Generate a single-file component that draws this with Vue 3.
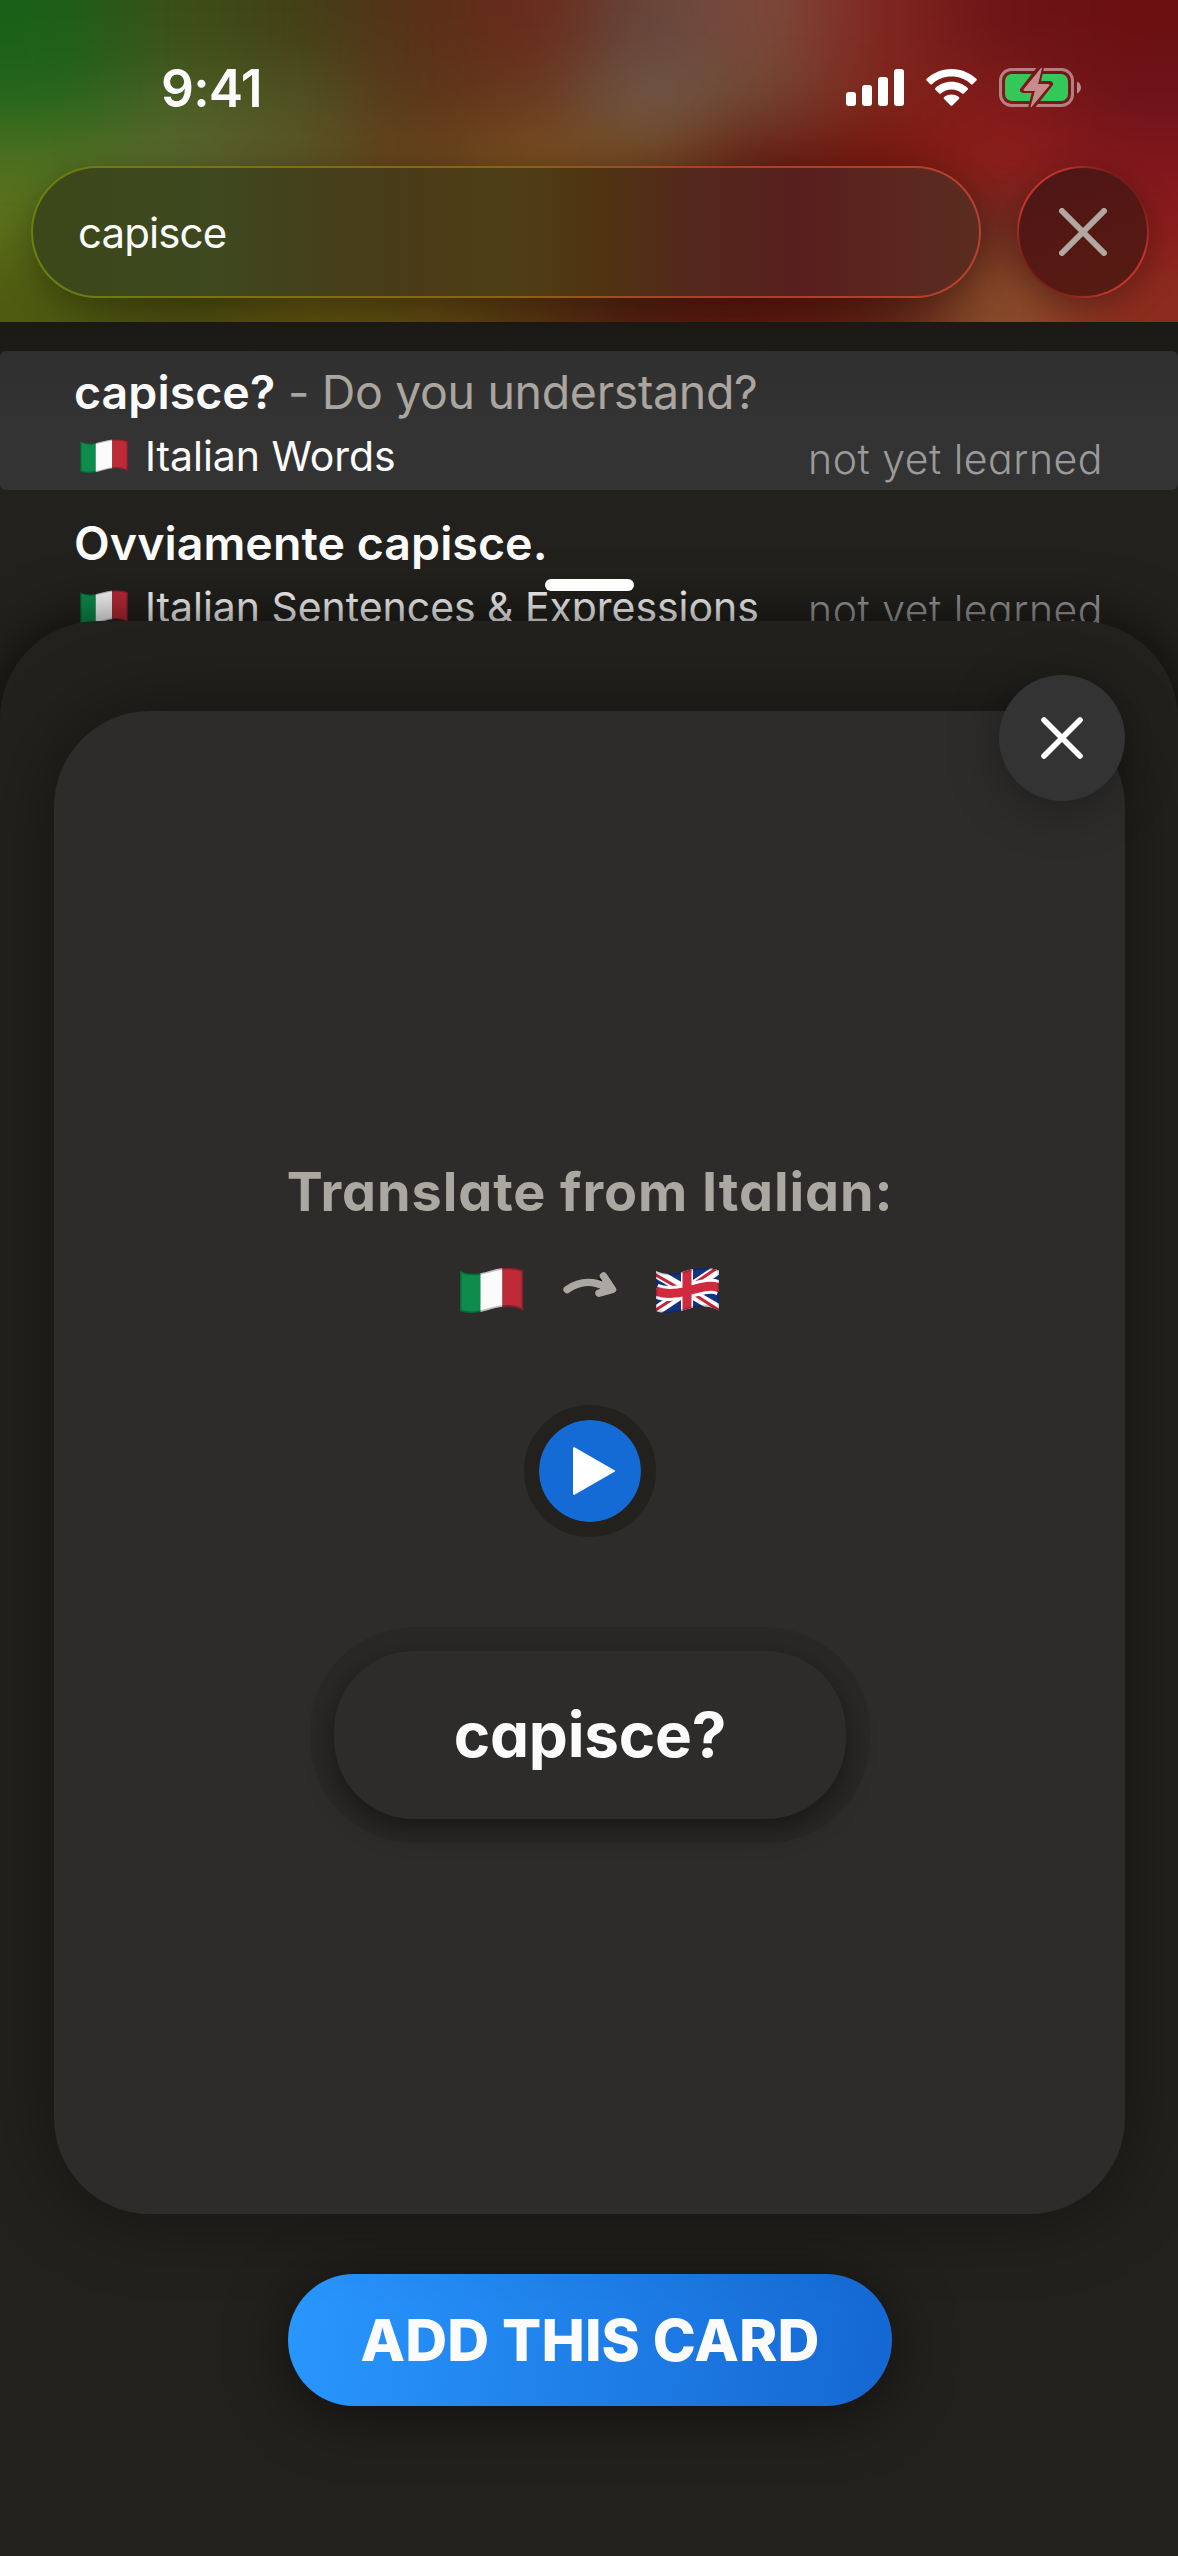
<script setup>
import { h } from 'vue'

const backdrop = [
  ['#1b6018', '#3c4f18', '#424016', '#573118', '#6a2a1a', '#66463c', '#7c4a3c', '#80261e', '#6c1418', '#6c1012'],
  ['#24661b', '#4b5e25', '#505224', '#5a3618', '#6a381e', '#6e5a4c', '#704630', '#80241a', '#821a1a', '#6e141a'],
  ['#507020', '#5b682f', '#5a5626', '#65401b', '#78501e', '#724820', '#651c11', '#76150e', '#901e1a', '#80161c'],
  ['#5c701a', '#4d5018', '#54461a', '#5c4216', '#5c4016', '#5a2a16', '#5c1a12', '#66200f', '#6a2c20', '#8c1c1c'],
  ['#4e5a10', '#484a10', '#584e0e', '#5c4810', '#56350f', '#521c10', '#5a160e', '#5e2014', '#8a502c', '#8c2c1e'],
]
const cw = 117.8
const ch = 64.4
const cells = backdrop.flatMap((row, r) =>
  row.map((fill, c) => {
    const x0 = c === 0 ? -220 : c * cw
    const x1 = c === 9 ? 1400 : (c + 1) * cw + 1
    const y0 = r === 0 ? -220 : r * ch
    const y1 = r === 4 ? 542 : (r + 1) * ch + 1
    return { fill, x: x0, y: y0, width: x1 - x0, height: y1 - y0, key: `${r}-${c}` }
  }),
)

const results = [
  { term: 'capisce?', meaning: 'Do you understand?', deck: 'Italian Words', state: 'not yet learned', active: true },
  { term: 'Ovviamente capisce.', meaning: '', deck: 'Italian Sentences & Expressions', state: 'not yet learned', active: false },
]

const wave = 'M.5 3C10 7.500 20 6 30 3S50 -2 63.500 2.500V42.500C54 36.500 42 38 32 41S11 47 .5 43Z'

const ItalyFlag = () =>
  h('svg', { viewBox: '0 0 64 46' }, [
    h('clipPath', { id: 'wave-it' }, [h('path', { d: wave })]),
    h('g', { 'clip-path': 'url(#wave-it)' }, [
      h('rect', { width: 22, height: 46, fill: '#0d8c4b' }),
      h('rect', { x: 21, width: 22, height: 46, fill: '#fbfbfb' }),
      h('rect', { x: 43, width: 21, height: 46, fill: '#be2a37' }),
      h('path', { d: wave, fill: 'none', stroke: '#000', 'stroke-opacity': 0.25, 'stroke-width': 3 }),
    ]),
  ])

const UkFlag = () =>
  h('svg', { viewBox: '0 0 64 46' }, [
    h('clipPath', { id: 'wave-uk' }, [h('path', { d: wave })]),
    h('g', { 'clip-path': 'url(#wave-uk)' }, [
      h('rect', { width: 64, height: 46, fill: '#12337f' }),
      h('path', { d: 'M-3 3L66 43M-3 45L66 -1', stroke: '#fff', 'stroke-width': 10 }),
      h('path', { d: 'M-3 5L30 24M35 24L66 44M-3 44L28 24M35 18L66 -3', stroke: '#c8253a', 'stroke-width': 3 }),
      h('path', { d: 'M0 23C10 27 20 26 32 23S54 16 64 20', stroke: '#fff', 'stroke-width': 15, fill: 'none' }),
      h('path', { d: 'M31.500 0V46', stroke: '#fff', 'stroke-width': 12 }),
      h('path', { d: 'M0 23C10 27 20 26 32 23S54 16 64 20M31.500 0V46', stroke: '#d02a40', 'stroke-width': 9, fill: 'none' }),
      h('path', { d: wave, fill: 'none', stroke: '#000', 'stroke-opacity': 0.2, 'stroke-width': 3 }),
    ]),
  ])
</script>

<template>
  <div class="screen">
    <header class="header">
      <svg class="backdrop" viewBox="0 0 1178 322">
        <filter id="soft" x="-20%" y="-20%" width="140%" height="140%">
          <feGaussianBlur stdDeviation="46 30" color-interpolation-filters="sRGB" />
        </filter>
        <g filter="url(#soft)">
          <rect v-for="c in cells" :key="c.key" :x="c.x" :y="c.y" :width="c.width" :height="c.height" :fill="c.fill" />
        </g>
      </svg>

      <div class="status">
        <span class="time">9:41</span>
        <div class="status-icons">
          <svg class="signal" viewBox="0 0 58 37">
            <g fill="#fff">
              <rect y="23" width="10" height="14" rx="3" />
              <rect x="16" y="16" width="10" height="21" rx="3" />
              <rect x="32" y="8" width="10" height="29" rx="3" />
              <rect x="48" width="10" height="37" rx="3" />
            </g>
          </svg>
          <svg class="wifi" viewBox="0 0 51 37">
            <g fill="#fff">
              <path d="M25.500 0C35.500 0 44 4 50.400 9.800Q51.200 10.700 50.400 11.600L46.700 15.200Q45.900 15.900 45 15.200C39.500 10.200 33 7.600 25.500 7.600S11.500 10.200 6 15.200Q5.100 15.900 4.300 15.200L.6 11.600Q-.2 10.700 .6 9.800C7 4 15.500 0 25.500 0Z" />
              <path d="M25.500 12.800C32 12.800 37.500 15.200 41.600 19Q42.500 19.900 41.600 20.800L37.800 24.500Q37 25.200 36.100 24.500C33 21.800 29.500 20.400 25.500 20.400S18 21.800 14.900 24.500Q14 25.200 13.200 24.500L9.400 20.800Q8.500 19.900 9.400 19C13.500 15.200 19 12.800 25.500 12.800Z" />
              <path d="M25.500 25.500C28.600 25.500 31 26.500 32.900 28.100Q33.700 29 32.900 29.900L26.400 36.400Q25.500 37.200 24.600 36.400L18.100 29.900Q17.300 29 18.100 28.100C20 26.500 22.400 25.500 25.500 25.500Z" />
            </g>
          </svg>
          <svg class="battery" viewBox="0 0 82 43">
            <mask id="bolt-gap">
              <rect width="82" height="43" fill="#fff" />
              <path d="M42 1L24 24H36.500L32 42L51 18H38.500Z" fill="#000" stroke="#000" stroke-width="6" stroke-linejoin="round" />
            </mask>
            <g mask="url(#bolt-gap)">
              <rect x="1.500" y="3.500" width="72" height="36" rx="11" fill="none" stroke="#fff" stroke-opacity=".45" stroke-width="3" />
              <rect x="6" y="8" width="63" height="27" rx="7" fill="#34c759" />
            </g>
            <path d="M78 15.500C80.500 16.500 82 19 82 21.500S80.500 26.500 78 27.500Z" fill="#fff" fill-opacity=".5" />
            <path d="M42.500 2L25 23.500Q24.500 24.500 25.500 24.500H36.500L32 41L50 19.500Q50.500 18.500 49.500 18.500H38.500Z" fill="#c48d8b" stroke="#c48d8b" stroke-linejoin="round" />
          </svg>
        </div>
      </div>

      <div class="search-row">
        <div class="glass field"><span>capisce</span></div>
        <div class="glass clear">
          <svg viewBox="0 0 48 48"><path d="M3 3L45 45M45 3L3 45" stroke="#b0a8a1" stroke-width="6" stroke-linecap="round" /></svg>
        </div>
      </div>
    </header>

    <main class="results">
      <article v-for="r in results" :key="r.term" class="result" :class="{ active: r.active }">
        <div class="title"><b>{{ r.term }}</b><span v-if="r.meaning" class="meaning"> - {{ r.meaning }}</span></div>
        <div class="sub">
          <ItalyFlag class="flag-small" />
          <span class="deck">{{ r.deck }}</span>
          <span class="state">{{ r.state }}</span>
        </div>
      </article>
    </main>

    <section class="sheet">
      <div class="handle"></div>
      <div class="card">
        <div class="close">
          <svg viewBox="0 0 42 42"><path d="M3 3L39 39M39 3L3 39" stroke="#fff" stroke-width="5.600" stroke-linecap="round" /></svg>
        </div>
        <div class="prompt">Translate from Italian:</div>
        <div class="direction">
          <ItalyFlag class="flag" />
          <svg class="arrow" viewBox="0 0 54 30">
            <path d="M31 12L40 6V14Z" fill="#0c0c0a" />
            <path d="M4.200 19.500C15 12 27 9 44 17.500M40.500 6L49.500 19.500L36 23.200" fill="none" stroke="#aba8a1" stroke-width="7.500" stroke-linecap="round" stroke-linejoin="round" />
            <path d="M36 14L42 10L48 19L38 22Z" fill="#aba8a1" />
          </svg>
          <UkFlag class="flag" />
        </div>
        <div class="play">
          <svg viewBox="0 0 42 48"><path d="M1 1.200L41 24L1 46.800Z" fill="#fff" stroke="#fff" stroke-width="2" stroke-linejoin="round" /></svg>
        </div>
        <div class="word">capisce?</div>
      </div>
      <div class="add">ADD THIS CARD</div>
    </section>
  </div>
</template>

<style>
body {
  background: #22211d;
}
</style>

<style scoped>
.screen {
  width: 1178px;
  height: 2556px;
  overflow: hidden;
  display: flex;
  flex-direction: column;
  background: #22211d;
  color: #fbfbfb;
  font-family: Inter, "Liberation Sans", sans-serif;
  white-space: nowrap;
}
svg {
  display: block;
  flex: none;
}
.header {
  position: relative;
  height: 322px;
  flex: none;
  overflow: hidden;
}
.backdrop {
  position: absolute;
  inset: 0;
  width: 1178px;
  height: 322px;
}
.status {
  position: relative;
  height: 98px;
  padding: 58px 97px 10px 161px;
  display: flex;
  align-items: flex-start;
  justify-content: space-between;
}
.time {
  font-size: 51.500px;
  line-height: 60px;
  font-weight: 600;
  letter-spacing: -0.8px;
}
.status-icons {
  display: flex;
  align-items: center;
  margin-top: 8px;
}
.signal {
  width: 58px;
  height: 37px;
}
.wifi {
  width: 51px;
  height: 37px;
  margin-left: 22px;
}
.battery {
  width: 82px;
  height: 43px;
  margin-left: 22px;
}
.search-row {
  position: relative;
  display: flex;
  justify-content: space-between;
  padding: 0 29px 0 31px;
}
.glass {
  box-sizing: border-box;
  height: 132px;
  border: 2.500px solid transparent;
  border-radius: 66px;
  display: flex;
  align-items: center;
  box-shadow: 0 10px 34px rgba(0, 0, 0, 0.3);
}
.field {
  width: 950px;
  padding-left: 45px;
  font-size: 42px;
  letter-spacing: -0.9px;
  background:
    linear-gradient(90deg, #3b4819, #3f481f 20%, #443f1a 31%, #493b17 40%, #4e3e16 50%, #4f3610 58%, #53281c 69%, #591f1e 82%, #5b271e 92%, #5a2c20) padding-box,
    linear-gradient(90deg, #67800e, #7a7410 20%, #8a6212 50%, #ad3d27 72%, #b8402c) border-box;
}
.clear {
  width: 132px;
  justify-content: center;
  background:
    linear-gradient(160deg, #4c1616, #561813 60%, #551c12) padding-box,
    linear-gradient(45deg, #6a1c14 12%, #c0342a 35%, #c0342a 65%, #6a1c1c 86%) border-box;
}
.clear svg {
  width: 48px;
  height: 48px;
}
.results {
  height: 299px;
  flex: none;
  box-sizing: border-box;
  padding-top: 29px;
  display: flex;
  flex-direction: column;
  gap: 12px;
  background: linear-gradient(#1a1915, #22211d 120px);
}
.result {
  height: 139px;
  flex: none;
  box-sizing: border-box;
  padding: 11px 75px 0 74px;
  border-radius: 6px;
}
.active {
  background: linear-gradient(#2f2f2f, #333 70px);
}
.title {
  font-size: 46.500px;
  line-height: 60px;
  letter-spacing: -0.35px;
}
.title b {
  font-weight: 600;
  letter-spacing: 0.05px;
}
.meaning {
  color: #aaa59f;
  white-space: pre;
}
.sub {
  display: flex;
  align-items: center;
  height: 56px;
  margin-top: 6px;
  line-height: 56px;
}
.flag-small {
  width: 48px;
  height: 35px;
  margin: 0 17px 0 6px;
}
.deck {
  font-size: 41px;
  letter-spacing: -0.05px;
}
.state {
  margin: 5px 0 0 auto;
  font-size: 41px;
  font-weight: 280;
  letter-spacing: 0.5px;
  font-feature-settings: "cv11";
  color: #9a9a9a;
}
.sheet {
  position: relative;
  flex: none;
  height: 1935px;
  box-sizing: border-box;
  padding: 90px 0 0 1px;
  border-radius: 98px 98px 0 0;
  background: #22211d;
  box-shadow: 0 0 60px rgba(0, 0, 0, 0.7);
  display: flex;
  flex-direction: column;
  align-items: center;
}
.handle {
  position: absolute;
  top: -42px;
  left: 545px;
  width: 89px;
  height: 12px;
  border-radius: 6px;
  background: #fff;
}
.card {
  position: relative;
  box-sizing: border-box;
  width: 1071px;
  height: 1503px;
  padding-left: 1px;
  border-radius: 96px;
  background: #2d2c2a;
  box-shadow: 0 0 80px rgba(0, 0, 0, 0.42);
  display: flex;
  flex-direction: column;
  align-items: center;
}
.close {
  position: absolute;
  top: -36px;
  right: 0;
  width: 126px;
  height: 126px;
  border-radius: 50%;
  background: #333;
  box-shadow: 0 6px 50px rgba(0, 0, 0, 0.35);
  display: flex;
  align-items: center;
  justify-content: center;
}
.close svg {
  width: 42px;
  height: 42px;
}
.prompt {
  margin-top: 446px;
  font-size: 54px;
  line-height: 70px;
  font-weight: 660;
  letter-spacing: 0.9px;
  font-feature-settings: "cv11";
  color: #aba8a1;
}
.direction {
  display: flex;
  margin: 41px 2px 0 0;
  align-items: flex-start;
}
.flag {
  width: 65px;
  height: 46px;
}
.arrow {
  width: 54px;
  height: 30px;
  margin: 2px 38px 0 39px;
}
.play {
  width: 102px;
  height: 102px;
  margin-top: 91px;
  border: 15px solid #22211d;
  border-radius: 50%;
  background: #156bd5;
  background-clip: padding-box;
  display: flex;
  align-items: center;
  justify-content: center;
}
.play svg {
  width: 42px;
  height: 48px;
  margin-left: 8px;
}
.word {
  width: 512px;
  height: 168px;
  margin-top: 114px;
  border-radius: 80px;
  background: #2d2c2a;
  box-shadow: 0 10px 28px rgba(0, 0, 0, 0.42), 0 0 0 24px rgba(0, 0, 0, 0.07);
  text-align: center;
  font-size: 62px;
  line-height: 167px;
  font-weight: 650;
  letter-spacing: -0.2px;
  font-feature-settings: "cv11";
}
.add {
  width: 604px;
  height: 132px;
  margin: 60px 0 0 1px;
  border-radius: 66px;
  background: linear-gradient(98deg, #2997ff, #1567d2);
  box-shadow: 0 8px 60px rgba(0, 0, 0, 0.55);
  text-align: center;
  font-size: 58px;
  line-height: 132px;
  font-weight: 800;
  letter-spacing: 0.1px;
}
</style>
